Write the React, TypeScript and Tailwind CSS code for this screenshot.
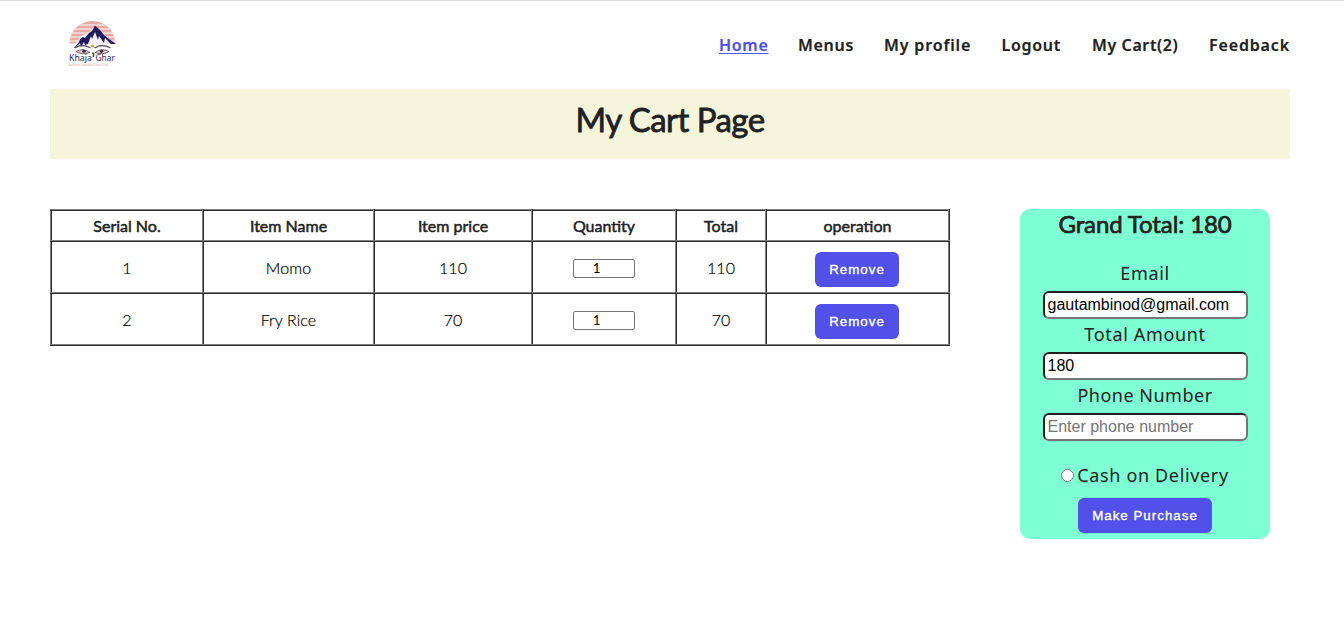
import React from 'react';

const items = [
  { id: 1, name: 'Momo', price: 110 },
  { id: 2, name: 'Fry Rice', price: 70 },
];

const nav = [
  { label: 'Home', cls: 'w-[49px] text-[#4f50e8] underline underline-offset-2 tracking-[0.7px]' },
  { label: 'Menus', cls: 'w-14 tracking-[0.7px]' },
  { label: 'My profile', cls: 'w-[87.5px]' },
  { label: 'Logout', cls: 'w-[60.5px] tracking-[0.7px]' },
  { label: 'My Cart(2)', cls: 'w-[87px] tracking-[0.6px]' },
  { label: 'Feedback', cls: 'w-[81px]' },
];

const sans = "font-['Noto_Sans',sans-serif]";
const lato = "font-['Lato',sans-serif]";
const arial = "font-['Liberation_Sans',sans-serif]";

function Logo() {
  return (
    <svg className="h-[50px] w-[50px]" viewBox="0 0 50 50">
      <path d="M2.500 23.500a22.800 22.500 0 0 1 45.600 0z" fill="#e8aaa6" />
      <path d="M12 5h27M7 9h37M4.500 13h42M3 17h45M2.500 21h46" stroke="#f7dedc" strokeWidth="1.300" />
      <path d="m8 24 7-9 5-1 8-8 8 7 12 11z" fill="#f3f0f8" />
      <path d="m28 5.500 5 4.500 4 5 5 4 7 5h-5l-6-6-1 5-5-7-1 4-3-8-3 7-1-3-3 8-3 1-1-3-3 5-1-4-5 5H7l5-6 1-3 3-2 2 1 4-5 3-2z" fill="#211b5c" />
      <path d="M7.500 28q8-5 16 0M27.500 28q8-5 16 0" fill="none" stroke="#55515c" strokeWidth="1.300" />
      <path d="M9 31.500q7-4 14 1-8 3-14-1m19 1q7-5 14-1-6 4-14 1" fill="#f1c8c8" stroke="#55414c" strokeWidth=".8" />
      <circle cx="17" cy="31.300" r="1.700" fill="#343458" />
      <circle cx="34.500" cy="31.300" r="1.700" fill="#343458" />
      <circle cx="25.700" cy="26" r="1.500" fill="#b9a02e" />
      <path d="M25 33q3 0 1 4" fill="none" stroke="#43552d" strokeWidth="1.500" />
      <text x="2" y="41.300" fontSize="9" fontFamily="Noto Sans" fill="#29295d" textLength="23" lengthAdjust="spacingAndGlyphs">Khaja</text>
      <text x="28.500" y="41.300" fontSize="9" fontFamily="Noto Sans" fill="#29295d" textLength="19.500" lengthAdjust="spacingAndGlyphs">Ghar</text>
      <text x="2" y="45.500" fontSize="3" fontFamily="Noto Sans" fill="#d9a5a5" textLength="39" lengthAdjust="spacingAndGlyphs">Authentic Nepalese Khaja Food</text>
    </svg>
  );
}

const cell = 'border-2 border-[#808080] [border-style:ridge] p-0 text-center';
const field = 'h-7 w-[205px] rounded-[6px] border-2 border-[#767676] bg-white px-[3px] text-base tracking-normal text-black [border-style:inset] placeholder:text-[#757575]';
const button = 'rounded-[6px] bg-[#5150e9] text-[13.33px] tracking-[1px] text-white [-webkit-text-stroke:0.35px_#fff]';

export default function App() {
  return (
    <div className={`min-h-[623px] border-t border-[#dcdcdc] bg-white text-[#212121] ${lato}`}>
      <header className="flex h-[88px] items-center justify-between pl-[67px] pr-[54px]">
        <Logo />
        <nav className={`flex gap-[30px] pb-px whitespace-nowrap text-base font-semibold tracking-[0.85px] [-webkit-text-stroke:0.2px] ${sans}`}>
          {nav.map((n) => (
            <a key={n.label} className={n.cls}>{n.label}</a>
          ))}
        </nav>
      </header>

      <div className="ml-[50px] flex h-[70px] w-[1240px] justify-center bg-[#f5f5dc] pt-[6px]">
        <h1 className="text-[33px] leading-[48px] font-normal tracking-[-0.55px] [-webkit-text-stroke:0.8px_#212121]">My Cart Page</h1>
      </div>

      <main className="ml-[50px] mt-[50px] flex items-start gap-[70px]">
        <table className="w-[900px] table-fixed border-collapse text-base">
          <colgroup>
            <col className="w-[152px]" /><col className="w-[171px]" /><col className="w-[158px]" />
            <col className="w-[144px]" /><col className="w-[90px]" /><col className="w-[183px]" />
          </colgroup>
          <thead>
            <tr className="h-[31px]">
              {['Serial No.', 'Item Name', 'Item price', 'Quantity', 'Total', 'operation'].map((h) => (
                <th key={h} className={`${cell} font-normal [-webkit-text-stroke:0.5px_#212121]`}>{h}</th>
              ))}
            </tr>
          </thead>
          <tbody className="font-light text-black [-webkit-text-stroke:0.2px]">
            {items.map((it) => (
              <tr key={it.id} className="h-[52px]">
                <td className={`${cell} pt-[2px]`}>{it.id}</td>
                <td className={`${cell} pt-[2px] tracking-[0.1px]`}>{it.name}</td>
                <td className={`${cell} pt-[2px]`}>{it.price}</td>
                <td className={`${cell} pt-[2px]`}>
                  <input readOnly value="1" className={`mx-auto mt-px block h-[19px] w-[62px] rounded-[2px] border border-[#767676] pr-[15px] text-center text-[13.33px] font-normal [-webkit-text-stroke:0px] ${lato}`} />
                </td>
                <td className={`${cell} pt-[2px]`}>{it.price}</td>
                <td className={`${cell} pr-[2px]`}>
                  <button className={`mx-auto mt-[4px] block h-[35px] w-[84px] pt-px pl-px ${button} ${arial}`}>Remove</button>
                </td>
              </tr>
            ))}
          </tbody>
        </table>

        <aside className={`flex h-[330px] w-[250px] flex-col items-center rounded-[10px] bg-[#7fffd4] text-lg tracking-[0.65px] ${sans}`}>
          <h2 className={`h-12 text-2xl leading-[30px] tracking-[-0.1px] [-webkit-text-stroke:0.7px_#212121] ${lato}`}>Grand Total: 180</h2>
          <label className="h-[34px] leading-[32px]">Email</label>
          <input readOnly value="gautambinod@gmail.com" className={`${field} ${arial}`} />
          <label className="h-[33px] leading-[30px]">Total Amount</label>
          <input readOnly value="180" className={`${field} ${arial}`} />
          <label className="h-[33px] leading-[30px] tracking-[0.5px]">Phone Number</label>
          <input placeholder="Enter phone number" className={`${field} ${arial}`} />
          <label className="mt-[17px] flex h-[34px] items-center gap-[3px]">
            <input type="radio" className="h-[13px] w-[13px]" />
            Cash on Delivery
          </label>
          <button className={`mt-[6px] h-[35px] w-[134px] pt-px ${button} ${arial}`}>Make Purchase</button>
        </aside>
      </main>
    </div>
  );
}
